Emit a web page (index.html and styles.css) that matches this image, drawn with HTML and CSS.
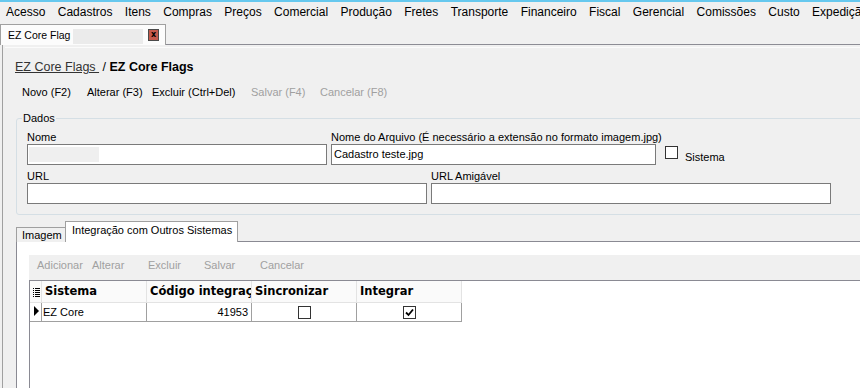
FILE: index.html
```html
<!DOCTYPE html>
<html lang="pt-BR">
<head>
<meta charset="utf-8">
<title>EZ Core Flag</title>
<link rel="stylesheet" href="styles.css">
</head>
<body>
<div class="topline"></div>
<div class="menubar">
  <span>Acesso</span>
  <span>Cadastros</span>
  <span>Itens</span>
  <span>Compras</span>
  <span>Preços</span>
  <span>Comercial</span>
  <span>Produção</span>
  <span>Fretes</span>
  <span>Transporte</span>
  <span>Financeiro</span>
  <span>Fiscal</span>
  <span>Gerencial</span>
  <span>Comissões</span>
  <span>Custo</span>
  <span>Expedição</span>
</div>
<div class="doctabs">
  <div class="doctab">
    <span class="doctab_title">EZ Core Flag</span>
    <span class="doctab_blank"></span>
    <span class="doctab_close">x</span>
  </div>
</div>
<div class="doc">
 <div class="docbody">
  <div class="crumb"><span class="crumb_link">EZ Core Flags&nbsp;</span> / <b>EZ Core Flags</b></div>
  <div class="toolbar">
    <span>Novo (F2)</span>
    <span>Alterar (F3)</span>
    <span>Excluir (Ctrl+Del)</span>
    <span class="off">Salvar (F4)</span>
    <span class="off">Cancelar (F8)</span>
  </div>
  <fieldset class="dados">
    <legend>Dados</legend>
    <div class="row1">
      <div class="fld fld_nome">
        <div class="lbl">Nome</div>
        <div class="edit"><span class="edit_blur"></span></div>
      </div>
      <div class="fld fld_arq">
        <div class="lbl">Nome do Arquivo (É necessário a extensão no formato imagem.jpg)</div>
        <div class="edit">Cadastro teste.jpg</div>
      </div>
      <div class="chk_sistema"><span class="cb"></span><span class="chk_text">Sistema</span></div>
    </div>
    <div class="row2">
      <div class="fld fld_url">
        <div class="lbl">URL</div>
        <div class="edit"></div>
      </div>
      <div class="fld fld_url">
        <div class="lbl">URL Amigável</div>
        <div class="edit"></div>
      </div>
    </div>
  </fieldset>
  <div class="tabs">
    <span class="tab">Imagem</span>
    <span class="tab tab_on">Integração com Outros Sistemas</span>
  </div>
  <div class="panel">
    <div class="gridwrap">
      <div class="gridbar">
        <span>Adicionar</span>
        <span>Alterar</span>
        <span>Excluir</span>
        <span>Salvar</span>
        <span>Cancelar</span>
      </div>
      <div class="gridbody">
        <div class="grid">
          <div class="hc hc_ind">
            <svg width="7" height="9" viewBox="0 0 7 9">
              <rect x="0" y="0" width="1" height="1" fill="#000"/>
              <rect x="0" y="2" width="1" height="1" fill="#000"/>
              <rect x="0" y="4" width="1" height="1" fill="#000"/>
              <rect x="0" y="6" width="1" height="1" fill="#000"/>
              <rect x="0" y="8" width="1" height="1" fill="#000"/>
              <rect x="2" y="0" width="5" height="1" fill="#000"/>
              <rect x="2" y="2" width="5" height="1" fill="#000"/>
              <rect x="2" y="4" width="5" height="1" fill="#000"/>
              <rect x="2" y="6" width="5" height="1" fill="#000"/>
              <rect x="2" y="8" width="5" height="1" fill="#000"/>
            </svg>
          </div>
          <div class="hc">Sistema</div>
          <div class="hc"><span class="hc_clip">Código integração</span></div>
          <div class="hc">Sincronizar</div>
          <div class="hc">Integrar</div>

          <div class="dc dc_ind">
            <svg width="5" height="10" viewBox="0 0 5 10"><polygon points="0,0 5,5 0,10" fill="#000"/></svg>
          </div>
          <div class="dc">EZ Core</div>
          <div class="dc dc_num">41953</div>
          <div class="dc dc_chk"><span class="cb"></span></div>
          <div class="dc dc_chk">
            <span class="cb">
              <svg width="11" height="11" viewBox="0 0 11 11"><path d="M2 5.5 L4.5 8 L9 2.5" fill="none" stroke="#000" stroke-width="1.8"/></svg>
            </span>
          </div>
        </div>
      </div>
    </div>
  </div>
 </div>
</div>
</body>
</html>
```

FILE: styles.css
```css
body {
  margin: 0;
  width: 860px;
  height: 388px;
  overflow: hidden;
  background: #f0f0f0;
  font-family: "Liberation Sans", Arial, sans-serif;
  font-size: 11px;
  color: #000;
}

.topline {
  height: 2px;
  background: #66c8ee;
}

.menubar {
  height: 20px;
  line-height: 20px;
  display: flex;
  gap: 12.4px;
  padding-left: 6px;
  font-size: 12px;
  white-space: nowrap;
}

/* document tab strip */
.doctabs {
  height: 22px;
  border-bottom: 1px solid #8c8c94;
  display: flex;
  align-items: flex-end;
}
.doctab {
  box-sizing: border-box;
  width: 166px;
  height: 21px;
  margin-bottom: -1px;
  border: 1px solid #a0a0a0;
  border-bottom: none;
  background: #fcfcfc;
  display: flex;
  align-items: center;
  padding-left: 7px;
}
.doctab_title {
  width: 65px;
  font-size: 10.5px;
  white-space: nowrap;
}
.doctab_blank {
  width: 70px;
  height: 15px;
  background: #ebebeb;
  margin-top: 2px;
}
.doctab_close {
  box-sizing: border-box;
  width: 11px;
  height: 12px;
  margin-left: 5px;
  border: 1px solid #4a4a4a;
  background: #c45a4c;
  font-family: "DejaVu Sans", sans-serif;
  font-weight: bold;
  font-size: 8px;
  line-height: 9px;
  text-align: center;
}

.doc {
  margin-left: 2px;
  border-left: 1px solid #a0a0a0;
  height: 341px;
  padding-top: 2px;
  overflow: hidden;
}
.docbody {
  margin-left: 2px;
  border-top: 1px solid #fbfbfb;
  padding-left: 10px;
}

.crumb {
  margin-top: 11px;
  font-size: 12.5px;
  line-height: 16px;
  white-space: nowrap;
}
.crumb_link {
  color: #333;
  text-decoration: underline;
}

.toolbar {
  display: grid;
  grid-template-columns: 65px 65px 99px 69px auto;
  margin-top: 10px;
  padding-left: 7px;
  line-height: 14px;
  white-space: nowrap;
}
.off {
  color: #a0a0a0;
}

/* Dados group */
.dados {
  margin: 12px 0 0 1px;
  padding: 0 10px 10px 10px;
  border: 1px solid #d5dfe5;
  border-radius: 3px;
  width: 900px;
  min-width: 0;
}
.dados legend {
  padding: 0 1px;
  margin-left: -5px;
  line-height: 14px;
}
.row1 {
  display: flex;
  gap: 4px;
  margin-top: 5px;
}
.row2 {
  display: flex;
  gap: 4px;
  margin-top: 4px;
}
.lbl {
  line-height: 14px;
  white-space: nowrap;
}
.fld_nome { width: 300px; }
.fld_arq { width: 325px; }
.fld_url { width: 400px; }
.edit {
  box-sizing: border-box;
  height: 21px;
  border: 1px solid #7a7a7a;
  background: #fff;
  padding: 0 2px;
  line-height: 19px;
  white-space: nowrap;
}
.edit_blur {
  display: block;
  width: 70px;
  height: 15px;
  margin: 2px 0 0 -1px;
  background: #efefef;
}
.chk_sistema {
  display: flex;
  align-items: flex-start;
  margin: 16px 0 0 5px;
}
.chk_text {
  margin: 4px 0 0 7px;
  line-height: 14px;
}
.cb {
  box-sizing: border-box;
  display: block;
  width: 13px;
  height: 13px;
  border: 1px solid #333;
  background: #fff;
}

/* tab control */
.tabs {
  display: flex;
  align-items: flex-end;
  height: 21px;
  margin: 6px 0 -1px 1px;
  position: relative;
  z-index: 1;
}
.tab {
  box-sizing: border-box;
  height: 15px;
  width: 49px;
  padding: 0 0 0 5px;
  border: 1px solid #a0a0a0;
  border-right: none;
  border-bottom: none;
  background: #f0f0f0;
  line-height: 14px;
  white-space: nowrap;
}
.tab_on {
  height: 21px;
  width: 173px;
  padding: 1px 0 0 6px;
  border-right: 1px solid #a0a0a0;
  background: #fff;
}
.panel {
  margin-left: 1px;
  width: 900px;
  height: 200px;
  border-top: 1px solid #8a8a93;
  border-left: 1px solid #8a8a93;
  background: #fff;
}
.gridwrap {
  margin: 13px 0 0 12px;
}
.gridbar {
  box-sizing: border-box;
  height: 25px;
  padding: 3px 0 0 8px;
  background: #f0f0f0;
  color: #a0a0a0;
  display: grid;
  grid-template-columns: 55px 56px 56px 56px auto;
  line-height: 14px;
}
.gridbody {
  height: 120px;
  border-top: 1px solid #8a8a93;
  border-left: 1px solid #8a8a93;
  background: #fff;
}
.grid {
  display: grid;
  grid-template-columns: 12px 105px 105px 105px 105px;
}
.hc {
  box-sizing: border-box;
  height: 22px;
  padding-left: 3px;
  border-right: 1px solid #e3e3e3;
  border-bottom: 1px solid #e3e3e3;
  background: #fafafa;
  font-family: "DejaVu Sans", sans-serif;
  font-weight: bold;
  font-size: 11.5px;
  line-height: 21px;
  white-space: nowrap;
  overflow: hidden;
}
.hc_clip {
  display: block;
  width: 101px;
  overflow: hidden;
}
.hc_ind {
  padding: 7px 0 0 3px;
}
.hc_ind svg {
  display: block;
}
.dc {
  box-sizing: border-box;
  height: 19px;
  padding-left: 1px;
  border-right: 1px solid #a0a0a0;
  border-bottom: 1px solid #a0a0a0;
  line-height: 18px;
  white-space: nowrap;
}
.dc_ind {
  padding: 3px 0 0 4px;
}
.dc_ind svg {
  display: block;
}
.dc_num {
  text-align: right;
  padding-right: 3px;
}
.dc_chk {
  display: flex;
  justify-content: center;
  align-items: center;
}
.dc_chk svg {
  display: block;
}
```
